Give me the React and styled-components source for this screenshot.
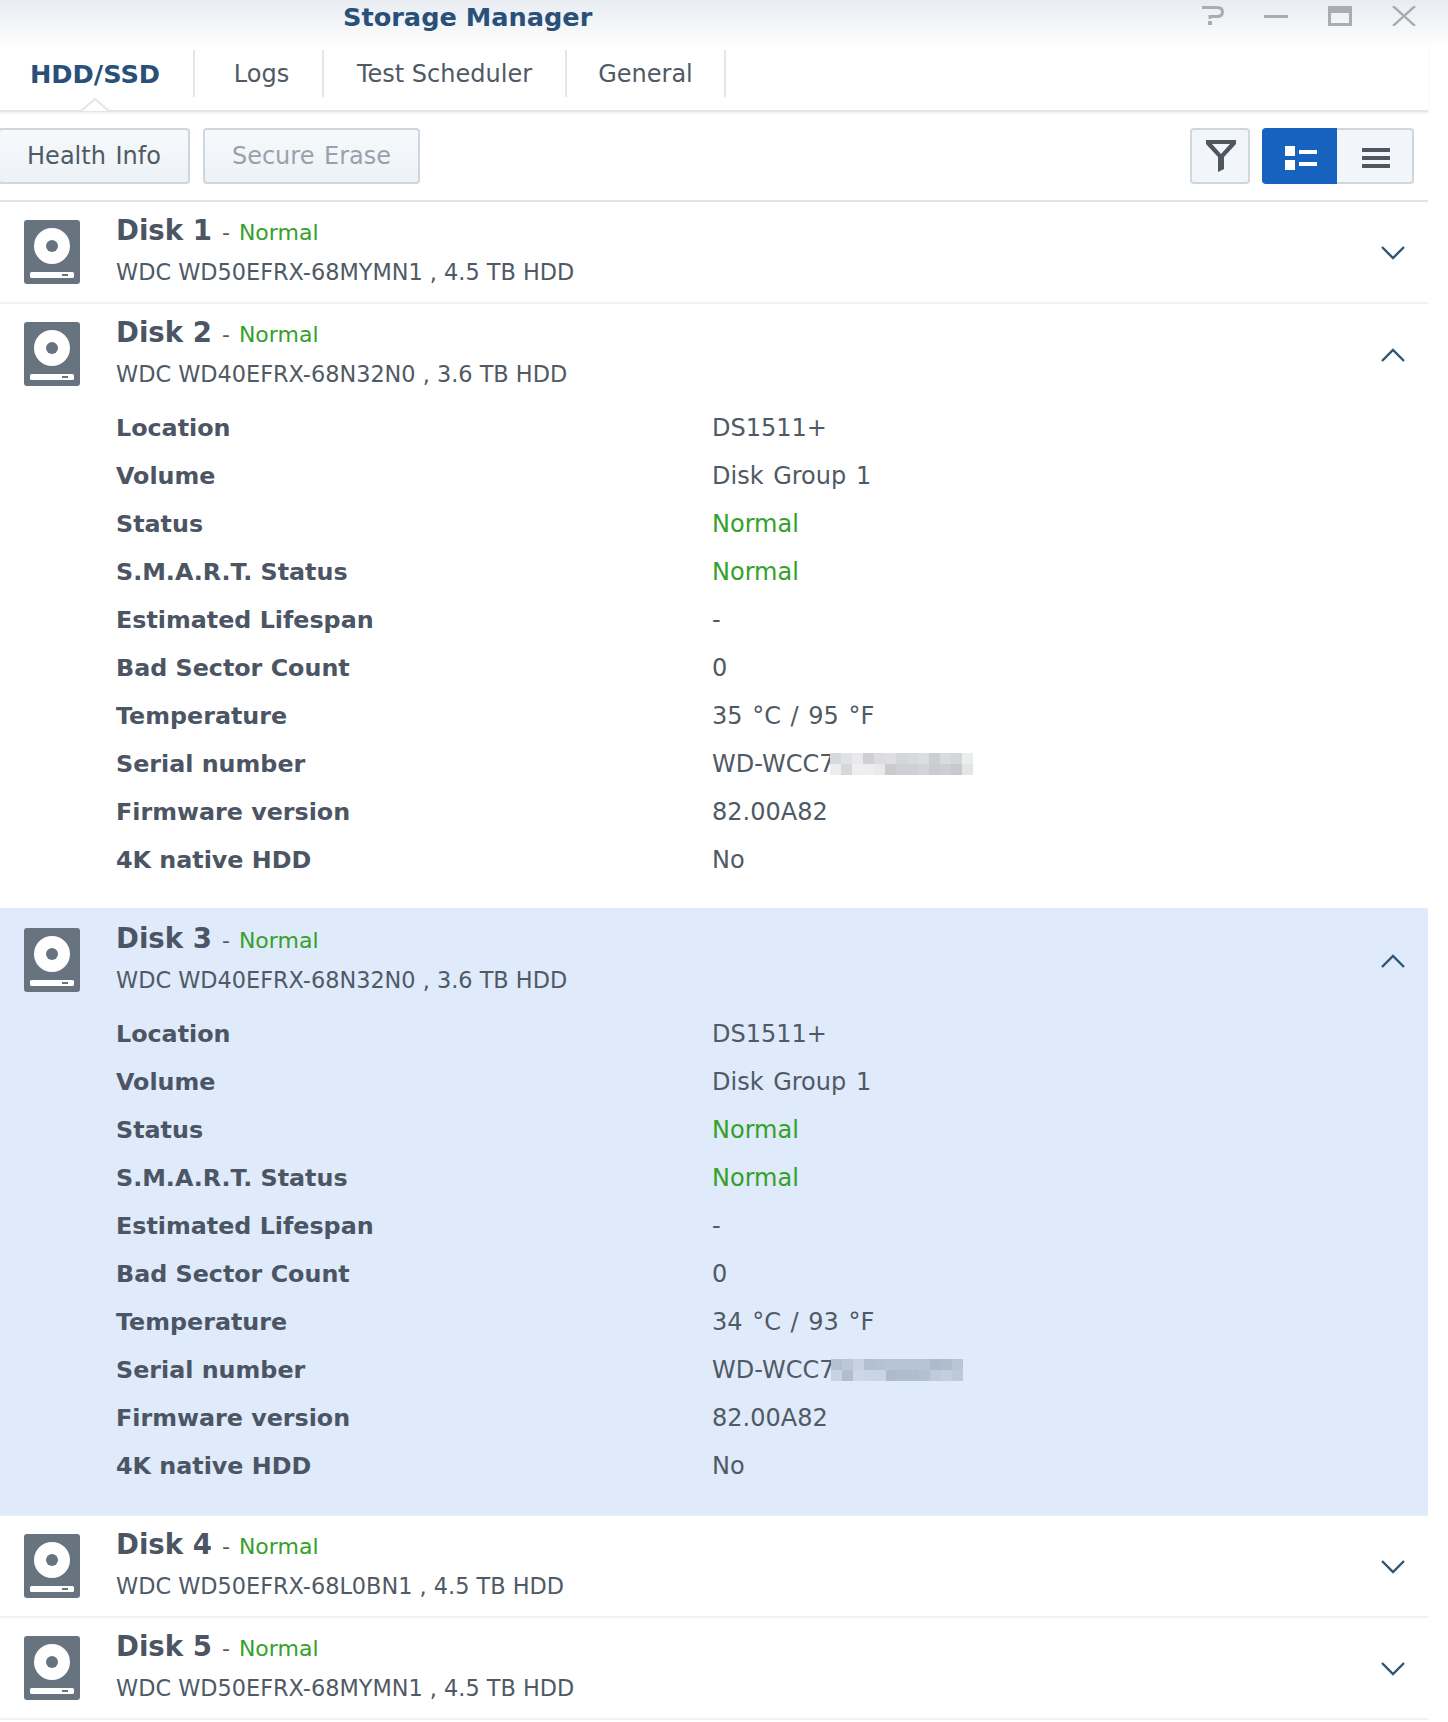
import React from 'react';
import styled, { createGlobalStyle } from 'styled-components';

const GlobalStyle = createGlobalStyle`
  html, body {
    margin: 0;
    padding: 0;
    background: #fff;
  }
  body {
    font-family: "DejaVu Sans", Verdana, sans-serif;
    color: #4b5563;
  }
`;

const Page = styled.div`
  width: 1448px;
  height: 1722px;
  overflow: hidden;
`;

const TitleBar = styled.div`
  display: flex;
  align-items: flex-start;
  height: 48px;
  padding-left: 343px;
  box-sizing: border-box;
  background: linear-gradient(#e8ecf1, #ffffff);
`;

const Title = styled.div`
  font-size: 25.6px;
  line-height: 34px;
  font-weight: bold;
  color: #285078;
`;

const WindowButtons = styled.div`
  display: flex;
  gap: 40px;
  margin-left: auto;
  margin-right: 32px;
  padding-top: 6px;
`;

const Main = styled.div`
  width: 1428px;
`;

const TabBar = styled.div`
  position: relative;
  display: flex;
  align-items: flex-start;
  height: 64px;
  padding-top: 2px;
  box-sizing: border-box;
  border-bottom: 2px solid #e2e5e9;
  box-shadow: 0 1px 2px rgba(90, 100, 115, 0.12);
`;

const Tab = styled.div`
  display: flex;
  align-items: center;
  justify-content: center;
  width: ${(p) => p.$width}px;
  height: 47px;
  padding-left: ${(p) => p.$pad || 0}px;
  padding-right: ${(p) => (p.$active ? 3 : 0)}px;
  font-size: ${(p) => (p.$active ? '25.6px' : '24px')};
  font-weight: ${(p) => (p.$active ? 'bold' : 'normal')};
  color: ${(p) => (p.$active ? '#285078' : '#4f5a65')};
  border-right: 2px solid #e3e7eb;
  box-sizing: border-box;
`;

const TabNotch = styled.svg`
  position: absolute;
  left: 80px;
  bottom: -2px;
`;

const Toolbar = styled.div`
  display: flex;
  align-items: center;
  height: 90px;
  padding-right: 14px;
  box-sizing: border-box;
  border-bottom: 2px solid #dde4ea;
`;

const Button = styled.div`
  display: flex;
  align-items: center;
  justify-content: center;
  width: ${(p) => p.$width}px;
  height: 56px;
  margin-left: ${(p) => p.$left || 0}px;
  box-sizing: border-box;
  border: 2px solid #cfd6de;
  border-radius: 4px;
  background: linear-gradient(#f7f9fb, #edf2f8);
  font-size: 24px;
  word-spacing: 2px;
  color: ${(p) => (p.$disabled ? '#98a2ad' : '#4f5a65')};
`;

const ToolIcons = styled.div`
  display: flex;
  gap: 12px;
  margin-left: auto;
`;

const IconButton = styled.div`
  display: flex;
  align-items: center;
  justify-content: center;
  width: 60px;
  height: 56px;
  padding-left: 2px;
  box-sizing: border-box;
  border: 2px solid #cfd6de;
  border-radius: 4px;
  background: #f2f5f9;
`;

const Segmented = styled.div`
  display: flex;
  width: 152px;
  height: 56px;
`;

const Segment = styled.div`
  display: flex;
  align-items: center;
  justify-content: center;
  flex: 1;
  padding: 4px 0 0 2px;
  box-sizing: border-box;
  ${(p) => (p.$active
    ? 'background: #1862bf; border-radius: 4px 0 0 4px;'
    : 'background: #f2f5f9; border: 2px solid #cfd6de; border-left: 0; border-radius: 0 4px 4px 0;')}
`;

const DiskRow = styled.div`
  background: ${(p) => (p.$selected ? '#dfeafa' : '#fff')};
  border-bottom: 2px solid ${(p) => (p.$selected ? '#e4eef8' : '#eff1f3')};
  ${(p) => p.$selected && 'margin-top: -2px; padding-top: 2px;'}
`;

const DiskHead = styled.div`
  display: flex;
  height: 100px;
  box-sizing: border-box;
  padding-left: 24px;
`;

const DiskIcon = styled.svg`
  margin-top: 18px;
  flex: none;
`;

const DiskText = styled.div`
  margin-left: 36px;
  padding-top: 9px;
`;

const DiskName = styled.div`
  display: flex;
  align-items: baseline;
  height: 41px;
  line-height: 40px;
  font-size: 22px;
`;

const DiskLabel = styled.span`
  font-size: 27.6px;
  font-weight: bold;
  color: #4b5563;
`;

const Dash = styled.span`
  margin: 0 9px 0 10px;
  color: #4f5a65;
`;

const Green = styled.span`
  color: #35a02a;
`;

const DiskModel = styled.div`
  font-size: 22.4px;
  line-height: 40px;
  color: #4f5a65;
  white-space: pre;
`;

const Chevron = styled.svg`
  margin: 43px 22px 0 auto;
  flex: none;
`;

const Details = styled.div`
  display: grid;
  grid-template-columns: 596px 1fr;
  grid-auto-rows: 48px;
  padding: 0 0 24px 116px;
`;

const Label = styled.div`
  font-size: 23.8px;
  line-height: 48px;
  font-weight: bold;
  color: #4b5563;
`;

const Value = styled.div`
  display: flex;
  align-items: center;
  font-size: 24px;
  word-spacing: 2px;
  margin-top: -1px;
  color: ${(p) => (p.$ok ? '#35a02a' : '#4f5a65')};
`;

const Mosaic = styled.svg`
  flex: none;
  margin-left: ${(p) => p.$shift}px;
  filter: blur(0.6px);
`;

function HddIcon() {
  return (
    <DiskIcon width="56" height="64" viewBox="0 0 56 64">
      <rect width="56" height="64" rx="3" fill="#687380" />
      <circle cx="28" cy="26" r="18" fill="#fff" />
      <circle cx="28" cy="26" r="6" fill="#687380" />
      <rect x="6" y="52" width="44" height="6" rx="1.5" fill="#fff" />
      <rect x="38" y="54" width="6" height="2" fill="#687380" />
    </DiskIcon>
  );
}

function Arrow({ up }) {
  return (
    <Chevron width="26" height="16" viewBox="0 0 26 16">
      <path
        d={up ? 'M2 14 L13 3 L24 14' : 'M2 2 L13 13 L24 2'}
        fill="none"
        stroke="#2f5573"
        strokeWidth="2.4"
      />
    </Chevron>
  );
}

// blurred part of the serial number, two rows of colour cells
function Blur({ rows, shift }) {
  const width = rows[0].length * 11;
  return (
    <Mosaic $shift={shift} width={width} height="22" viewBox={`0 0 ${width} 22`}>
      {rows.map((row, r) => row.map((color, c) => (
        <rect key={`${r}-${c}`} x={c * 11} y={r * 11} width="11" height="11" fill={color} />
      )))}
    </Mosaic>
  );
}

const blurA = [
  ['#d8d9dc', '#e1e2e5', '#e9eaec', '#cfd0d5', '#dcdde0', '#dfdfe3', '#d5d6da', '#d8d9dc', '#dcdde0', '#ccced2', '#dadbde', '#d5d6da', '#eceded'],
  ['#ededef', '#d6d7da', '#efefef', '#eeeeef', '#e9e9ea', '#c9cbcf', '#cfd0d4', '#cfd0d4', '#d3d4d8', '#cbccd0', '#cdced2', '#c8c9ce', '#e4e5e7'],
];

const blurB = [
  ['#b4c1d2', '#bcc8d8', '#c7d3e3', '#b3c0d2', '#b5c2d3', '#b8c4d5', '#b8c4d5', '#b8c4d5', '#b8c4d5', '#aebbcd', '#b0bdcf', '#b9c5d5'],
  ['#c8d4e4', '#b1bed0', '#ccd8e8', '#cad6e6', '#c9d5e5', '#aebbce', '#b0bdcf', '#b0bdcf', '#b4c1d3', '#bfcbdb', '#c3cfdf', '#bdc9d9'],
];

const disks = [
  { id: 1, model: 'WDC WD50EFRX-68MYMN1 , 4.5 TB HDD' },
  {
    id: 2,
    model: 'WDC WD40EFRX-68N32N0 , 3.6 TB HDD',
    open: true,
    temp: '35 °C / 95 °F',
    blur: { rows: blurA, shift: -4 },
  },
  {
    id: 3,
    model: 'WDC WD40EFRX-68N32N0 , 3.6 TB HDD',
    open: true,
    selected: true,
    temp: '34 °C / 93 °F',
    blur: { rows: blurB, shift: -3 },
  },
  { id: 4, model: 'WDC WD50EFRX-68L0BN1 , 4.5 TB HDD' },
  { id: 5, model: 'WDC WD50EFRX-68MYMN1 , 4.5 TB HDD' },
];

function DiskDetails({ disk }) {
  return (
    <Details>
      <Label>Location</Label>
      <Value>DS1511+</Value>
      <Label>Volume</Label>
      <Value>Disk Group 1</Value>
      <Label>Status</Label>
      <Value $ok>Normal</Value>
      <Label>S.M.A.R.T. Status</Label>
      <Value $ok>Normal</Value>
      <Label>Estimated Lifespan</Label>
      <Value>-</Value>
      <Label>Bad Sector Count</Label>
      <Value>0</Value>
      <Label>Temperature</Label>
      <Value>{disk.temp}</Value>
      <Label>Serial number</Label>
      <Value>
        WD-WCC7
        <Blur {...disk.blur} />
      </Value>
      <Label>Firmware version</Label>
      <Value>82.00A82</Value>
      <Label>4K native HDD</Label>
      <Value>No</Value>
    </Details>
  );
}

export default function App() {
  return (
    <Page>
      <GlobalStyle />
      <TitleBar>
        <Title>Storage Manager</Title>
        <WindowButtons>
          <svg width="24" height="20" viewBox="0 0 24 20">
            <path d="M2 1.5 H17 Q22.5 1.5 22.5 6 Q22.5 10.5 17 10.5 H10 V13" fill="none" stroke="#a9adb3" strokeWidth="3" />
            <rect x="8" y="15" width="4" height="4" fill="#a9adb3" />
          </svg>
          <svg width="24" height="20" viewBox="0 0 24 20">
            <rect y="9" width="24" height="3" fill="#a9adb3" />
          </svg>
          <svg width="24" height="20" viewBox="0 0 24 20">
            <path d="M0 0 H24 V20 H0 Z M3 7 V17 H21 V7 Z" fill="#a9adb3" fillRule="evenodd" />
          </svg>
          <svg width="24" height="20" viewBox="0 0 24 20">
            <path d="M1 0 L23 20 M23 0 L1 20" stroke="#a9adb3" strokeWidth="2.4" />
          </svg>
        </WindowButtons>
      </TitleBar>
      <Main>
        <TabBar>
          <Tab $width={195} $active>HDD/SSD</Tab>
          <Tab $width={129} $pad={6}>Logs</Tab>
          <Tab $width={243}>Test Scheduler</Tab>
          <Tab $width={159}>General</Tab>
          <TabNotch width="30" height="14" viewBox="0 0 30 14">
            <path d="M1 13 L15 1 L29 13" fill="#fff" stroke="#e2e5e9" strokeWidth="2" />
          </TabNotch>
        </TabBar>
        <Toolbar>
          <Button $width={192} $left={-2}>Health Info</Button>
          <Button $width={217} $left={13} $disabled>Secure Erase</Button>
          <ToolIcons>
            <IconButton>
              <svg width="32" height="34" viewBox="0 0 32 34">
                <path d="M1 1 H31 V5 L19 18 V30 L13 33 V18 L1 5 Z M7 5 L16 15 L25 5 Z" fill="#4f5660" fillRule="evenodd" />
              </svg>
            </IconButton>
            <Segmented>
              <Segment $active>
                <svg width="32" height="24" viewBox="0 0 32 24">
                  <rect width="10" height="10" fill="#fff" />
                  <rect y="14" width="10" height="10" fill="#fff" />
                  <rect x="14" y="4" width="18" height="4" fill="#fff" />
                  <rect x="14" y="16" width="18" height="4" fill="#fff" />
                </svg>
              </Segment>
              <Segment>
                <svg width="28" height="20" viewBox="0 0 28 20">
                  <rect width="28" height="4" fill="#4f5660" />
                  <rect y="8" width="28" height="4" fill="#4f5660" />
                  <rect y="16" width="28" height="4" fill="#4f5660" />
                </svg>
              </Segment>
            </Segmented>
          </ToolIcons>
        </Toolbar>
        {disks.map((disk) => (
          <DiskRow key={disk.id} $selected={disk.selected}>
            <DiskHead>
              <HddIcon />
              <DiskText>
                <DiskName>
                  <DiskLabel>
                    Disk {disk.id}
                  </DiskLabel>
                  <Dash>-</Dash>
                  <Green>Normal</Green>
                </DiskName>
                <DiskModel>{disk.model}</DiskModel>
              </DiskText>
              <Arrow up={disk.open} />
            </DiskHead>
            {disk.open && <DiskDetails disk={disk} />}
          </DiskRow>
        ))}
      </Main>
    </Page>
  );
}
